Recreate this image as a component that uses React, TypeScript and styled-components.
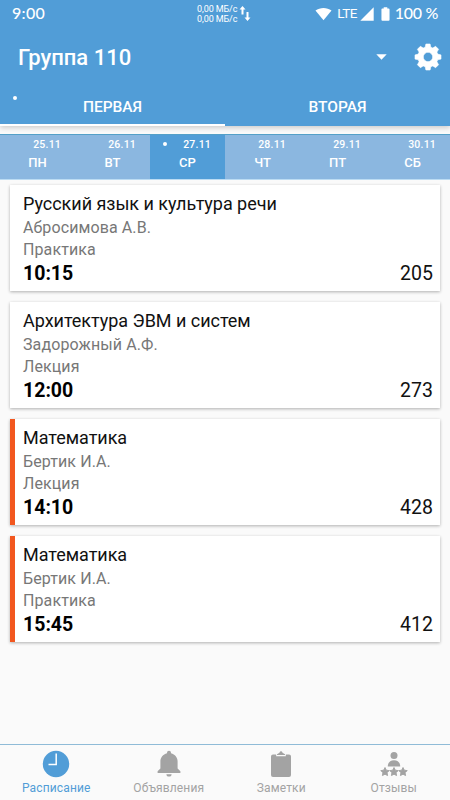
import React from "react";
import styled, { createGlobalStyle } from "styled-components";

const blue = "#519dd7";

const GlobalStyle = createGlobalStyle`
  * { box-sizing: border-box; }
  body { margin: 0; background: #fafafa; font-family: Roboto, sans-serif; }
  svg { display: block; flex: none; }
`;

const Screen = styled.div`
  width: 450px;
  height: 800px;
  display: flex;
  flex-direction: column;
  overflow: hidden;
  background: #fafafa;
`;

const Header = styled.header`
  height: 126px;
  flex: none;
  background: ${blue};
  color: #fff;
  display: flex;
  flex-direction: column;
  box-shadow: 0 2px 5px rgba(0, 0, 0, 0.18);
`;

const StatusBar = styled.div`
  height: 27px;
  display: flex;
  align-items: center;
  padding: 0 12px 0 12px;
`;

const StatusText = styled.span<{ $spacing: number }>`
  font: 500 16px/20px Lato, sans-serif;
  letter-spacing: ${(p) => p.$spacing}px;
  white-space: nowrap;
  padding-bottom: 1px;
`;

const Traffic = styled.div`
  margin-left: 152px;
  width: 42px;
  font-size: 9px;
  line-height: 10px;
  letter-spacing: -0.1px;
  white-space: nowrap;
`;

const StatusIcons = styled.div`
  margin-left: auto;
  display: flex;
  align-items: center;
`;

const Network = styled.span`
  font-size: 13.5px;
  line-height: 20px;
  letter-spacing: -0.6px;
  padding-bottom: 1px;
  margin: 0 3px 0 5px;
`;

const Toolbar = styled.div`
  height: 60px;
  display: flex;
  align-items: center;
  padding: 0 8px 0 18px;
`;

const Title = styled.h1`
  margin: 0 auto 0 0;
  font-size: 22px;
  line-height: 28px;
  padding-top: 2px;
  font-weight: 500;
`;

const Tabs = styled.div`
  height: 39px;
  display: flex;
`;

const Tab = styled.div<{ $active?: boolean }>`
  flex: 1;
  position: relative;
  text-align: center;
  font-size: 15.5px;
  line-height: 20px;
  font-weight: 500;
  padding-top: 10px;
  border-bottom: 2px solid ${(p) => (p.$active ? "#fff" : "transparent")};
`;

const TabDot = styled.i`
  position: absolute;
  left: 13px;
  top: 9px;
  width: 4px;
  height: 4px;
  border-radius: 50%;
  background: #fff;
`;

const Days = styled.div`
  height: 46px;
  margin-top: 8px;
  flex: none;
  display: flex;
  border-top: 1px solid #54a0c8;
  border-bottom: 1px solid #bcdcf3;
`;

const Day = styled.div<{ $active?: boolean }>`
  flex: 1;
  position: relative;
  color: #fff;
  background: ${(p) => (p.$active ? blue : "#8bb7e0")};
  font-weight: 500;
`;

const DayDate = styled.div`
  text-align: right;
  padding: 3px 14px 0 0;
  font-size: 10.5px;
  line-height: 13px;
  letter-spacing: 0.2px;
`;

const DayName = styled.div`
  text-align: center;
  font-size: 13px;
  line-height: 18px;
  padding-top: 3px;
`;

const DayDot = styled.i`
  position: absolute;
  left: 13px;
  top: 7px;
  width: 4px;
  height: 4px;
  border-radius: 50%;
  background: #fff;
`;

const Lessons = styled.main`
  flex: 1;
  display: flex;
  flex-direction: column;
  gap: 11px;
  padding: 5px 10px 0;
`;

const Card = styled.article<{ $marked?: boolean }>`
  height: 106px;
  flex: none;
  background: #fff;
  padding: 8px 7px 0 ${(p) => (p.$marked ? 8 : 13)}px;
  border-left: ${(p) => (p.$marked ? "5px solid #f2571f" : "0")};
  box-shadow: 0 1px 3px rgba(0, 0, 0, 0.3);
`;

const Subject = styled.div`
  font-size: 18px;
  line-height: 22px;
  padding-bottom: 1px;
  letter-spacing: -0.03px;
  color: #111;
`;

const Detail = styled.div`
  font-size: 16px;
  line-height: 22px;
  padding-top: 1px;
  height: 22px;
  letter-spacing: 0.1px;
  color: #777;
`;

const CardFooter = styled.div`
  display: flex;
  justify-content: space-between;
  padding-top: 1px;
  font-size: 19.5px;
  line-height: 26px;
  color: #111;
`;

const Time = styled.strong`
  font-weight: 700;
  color: #000;
`;

const BottomNav = styled.nav`
  height: 56px;
  flex: none;
  border-top: 1px solid #8fbbd7;
  display: flex;
`;

const NavItem = styled.div<{ $active?: boolean }>`
  flex: 1;
  display: flex;
  flex-direction: column;
  align-items: center;
  color: ${(p) => (p.$active ? blue : "#a3a3a3")};
  padding-top: 5px;
`;

const NavLabel = styled.span`
  font-size: 12px;
  line-height: 18px;
  padding-top: 1px;
  letter-spacing: 0.15px;
`;

const days = [
  ["25.11", "ПН"],
  ["26.11", "ВТ"],
  ["27.11", "СР"],
  ["28.11", "ЧТ"],
  ["29.11", "ПТ"],
  ["30.11", "СБ"],
];

const lessons = [
  { subject: "Русский язык и культура речи", teacher: "Абросимова А.В.", kind: "Практика", time: "10:15", room: "205", marked: false },
  { subject: "Архитектура ЭВМ и систем", teacher: "Задорожный А.Ф.", kind: "Лекция", time: "12:00", room: "273", marked: false },
  { subject: "Математика", teacher: "Бертик И.А.", kind: "Лекция", time: "14:10", room: "428", marked: true },
  { subject: "Математика", teacher: "Бертик И.А.", kind: "Практика", time: "15:45", room: "412", marked: true },
];

const ClockIcon = () => (
  <svg width="28" height="28" viewBox="0 0 28 28">
    <circle cx="14" cy="14" r="13.2" fill="currentColor" />
    <path d="M14.200 3.500v11H6.500" fill="none" stroke="#fff" strokeWidth="1.5" />
  </svg>
);

const BellIcon = () => (
  <svg width="28" height="28" viewBox="0 0 28 28" fill="currentColor">
    <path d="M14 .8a2 2 0 0 1 2 2v.5c4 1 6.600 4.300 6.600 8.300v7l2.800 2.600v1.800H2.600v-1.800l2.800-2.600v-7c0-4 2.600-7.300 6.600-8.300v-.5a2 2 0 0 1 2-2zM11.400 24.200h5.200a2.600 2.400 0 0 1-5.200 0z" />
  </svg>
);

const ClipboardIcon = () => (
  <svg width="28" height="28" viewBox="0 0 28 28" fill="currentColor">
    <path d="M6 4.500h3.200v1.800h9.600V4.500H22a2 2 0 0 1 2 2V25a2 2 0 0 1-2 2H6a2 2 0 0 1-2-2V6.500a2 2 0 0 1 2-2z" />
    <path d="M10 5V4.200l2.500-1.500c.4-2 2.600-2 3 0L18 4.200V5z" />
  </svg>
);

const star = "M0-4.200 1.300-1.500 4.200-1.100 2.100 1 2.600 3.900 0 2.500-2.600 3.900-2.100 1-4.200-1.100-1.300-1.500z";

const ReviewsIcon = () => (
  <svg width="28" height="28" viewBox="0 0 28 28" fill="currentColor">
    <circle cx="14" cy="5.400" r="3.500" />
    <path d="M7.800 16.500c0-4 2.300-6.300 6.200-6.300s6.200 2.300 6.200 6.300z" />
    {[5, 14, 23].map((x) => (
      <path key={x} d={star} transform={`translate(${x} 21.7)`} stroke="currentColor" strokeWidth=".9" strokeLinejoin="round" />
    ))}
  </svg>
);

const TrafficArrows = () => (
  <svg width="12" height="17" viewBox="0 0 12 17" fill="#fff">
    <path d="M3.500 1 6.500 4.500H4.500V9.500H2.500V4.500H.5zM8.500 16l-3-3.500h2V7h2v5.500h2z" />
  </svg>
);

const WifiIcon = () => (
  <svg width="17" height="14" viewBox="0 0 18 14">
    <path d="M.5 3.300C5.300-.4 12.700-.4 17.500 3.300L9 13.700z" fill="#fff" />
  </svg>
);

const SignalIcon = () => (
  <svg width="14" height="14" viewBox="0 0 14 14">
    <path d="M13.700.3v13.400H.3z" fill="#fff" />
  </svg>
);

const BatteryIcon = styled.svg`
  margin: 0 5px 0 7px;
`;

const CaretIcon = styled.svg`
  margin-right: 27px;
`;

const GearIcon = () => (
  <svg width="28" height="28" viewBox="0 0 28 28" fill="#fff">
    <path
      fillRule="evenodd"
      d="M11.900 1h4.200l.7 3.200 2 .8 2.800-1.700 3 3L22.900 9.100l.8 2L27 11.900v4.200l-3.300.7-.8 2 1.700 2.900-3 3-2.800-1.800-2 .8-.7 3.300h-4.200l-.7-3.300-2-.8-2.800 1.800-3-3 1.700-2.900-.8-2L1 16.100v-4.200l3.300-.8.8-2-1.700-2.800 3-3L9.200 5l2-.8zM14 9.300a4.700 4.700 0 1 0 0 9.400 4.700 4.700 0 0 0 0-9.400z"
      stroke="#fff"
      strokeWidth=".6"
      strokeLinejoin="round"
    />
  </svg>
);

const navItems = [
  { label: "Расписание", Icon: ClockIcon },
  { label: "Объявления", Icon: BellIcon },
  { label: "Заметки", Icon: ClipboardIcon },
  { label: "Отзывы", Icon: ReviewsIcon },
];

export default function App() {
  return (
    <Screen>
      <GlobalStyle />
      <Header>
        <StatusBar>
          <StatusText $spacing={0.3}>9:00</StatusText>
          <Traffic>
            <div>0,00 МБ/с</div>
            <div>0,00 МБ/с</div>
          </Traffic>
          <TrafficArrows />
          <StatusIcons>
            <WifiIcon />
            <Network>LTE</Network>
            <SignalIcon />
            <BatteryIcon width="9" height="14" viewBox="0 0 10 15">
              <path d="M3 0h4v1.500h1.500a1 1 0 0 1 1 1V14a1 1 0 0 1-1 1h-7a1 1 0 0 1-1-1V2.500a1 1 0 0 1 1-1H3z" fill="#fff" />
            </BatteryIcon>
            <StatusText $spacing={-0.3}>100 %</StatusText>
          </StatusIcons>
        </StatusBar>
        <Toolbar>
          <Title>Группа 110</Title>
          <CaretIcon width="11" height="6" viewBox="0 0 11 6">
            <path d="M.3.200h10.400L5.500 5.700z" fill="#fff" />
          </CaretIcon>
          <GearIcon />
        </Toolbar>
        <Tabs>
          <Tab $active>
            <TabDot />
            ПЕРВАЯ
          </Tab>
          <Tab>ВТОРАЯ</Tab>
        </Tabs>
      </Header>
      <Days>
        {days.map(([date, name], i) => (
          <Day key={name} $active={i === 2}>
            {i === 2 && <DayDot />}
            <DayDate>{date}</DayDate>
            <DayName>{name}</DayName>
          </Day>
        ))}
      </Days>
      <Lessons>
        {lessons.map((l) => (
          <Card key={l.time} $marked={l.marked}>
            <Subject>{l.subject}</Subject>
            <Detail>{l.teacher}</Detail>
            <Detail>{l.kind}</Detail>
            <CardFooter>
              <Time>{l.time}</Time>
              <span>{l.room}</span>
            </CardFooter>
          </Card>
        ))}
      </Lessons>
      <BottomNav>
        {navItems.map(({ label, Icon }, i) => (
          <NavItem key={label} $active={i === 0}>
            <Icon />
            <NavLabel>{label}</NavLabel>
          </NavItem>
        ))}
      </BottomNav>
    </Screen>
  );
}
